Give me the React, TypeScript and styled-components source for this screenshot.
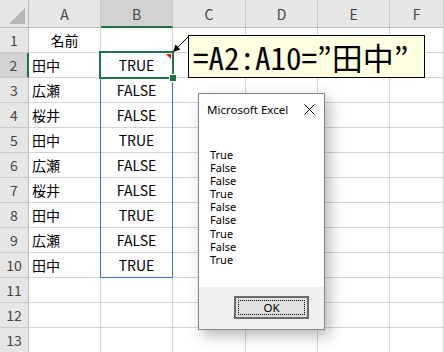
import styled, { createGlobalStyle } from "styled-components";

const names = ["田中", "広瀬", "桜井", "田中", "広瀬", "桜井", "田中", "広瀬", "田中"];
const columns = ["A", "B", "C", "D", "E", "F"];
const ROW_COUNT = 13;

type Pos = { $r: number; $c: number };

const GlobalStyle = createGlobalStyle`
  html, body {
    margin: 0;
    padding: 0;
    background: #fff;
    overflow: hidden;
  }
  body {
    font-family: "Noto Sans CJK JP", "Noto Sans", sans-serif;
  }
`;

const Page = styled.div`
  position: relative;
  width: 444px;
  height: 352px;
  overflow: hidden;
`;

const Sheet = styled.div`
  display: grid;
  grid-template-columns: 29px 72px 72px 73px 72px 72px 1fr;
  grid-template-rows: 28px repeat(${ROW_COUNT}, 25px);
  font-family: "Noto Sans CJK JP", "Noto Sans", sans-serif;
  font-size: 14px;
  color: #000;
`;

const Corner = styled.div`
  grid-row: 1;
  grid-column: 1;
  position: relative;
  background: #e6e6e6;
  border-right: 1px solid #bcbcbc;
  border-bottom: 1px solid #bcbcbc;
  &::after {
    content: "";
    position: absolute;
    right: 3px;
    bottom: 3px;
    width: 0;
    height: 0;
    border-left: 16px solid transparent;
    border-bottom: 16px solid #b5b5b5;
  }
`;

const ColHead = styled.div<Pos & { $active?: boolean }>`
  grid-row: ${({ $r }) => $r};
  grid-column: ${({ $c }) => $c};
  display: flex;
  align-items: center;
  justify-content: center;
  background: ${({ $active }) => ($active ? "#d2d2d2" : "#e6e6e6")};
  border-right: 1px solid #c9c9c9;
  border-bottom: ${({ $active }) => ($active ? "2px solid #217346" : "1px solid #bcbcbc")};
  color: #444;
  font-size: 14px;
  padding-top: 1px;
`;

const RowHead = styled.div<Pos & { $active?: boolean }>`
  grid-row: ${({ $r }) => $r};
  grid-column: ${({ $c }) => $c};
  display: flex;
  align-items: center;
  justify-content: center;
  background: ${({ $active }) => ($active ? "#d2d2d2" : "#e6e6e6")};
  border-right: ${({ $active }) => ($active ? "2px solid #217346" : "1px solid #bcbcbc")};
  border-bottom: 1px solid #c9c9c9;
  color: #444;
  font-size: 14px;
`;

const Cell = styled.div<Pos & { $align?: "left" | "center" }>`
  grid-row: ${({ $r }) => $r};
  grid-column: ${({ $c }) => $c};
  display: flex;
  align-items: center;
  justify-content: ${({ $align }) => ($align === "center" ? "center" : "flex-start")};
  padding-left: ${({ $align }) => ($align === "center" ? "0" : "3px")};
  border-right: 1px solid #d4d4d4;
  border-bottom: 1px solid #d4d4d4;
  white-space: nowrap;
  overflow: hidden;
`;

const RangeBox = styled.div`
  grid-column: 3;
  grid-row: 3 / 12;
  margin-left: -1px;
  border: 1px solid #3a6fd8;
  border-top: none;
  pointer-events: none;
  z-index: 1;
`;

const Selection = styled.div`
  position: relative;
  grid-column: 3;
  grid-row: 3;
  margin: -2px -1px -1px -2px;
  border: 2px solid #217346;
  pointer-events: none;
  z-index: 2;
`;

const FillHandle = styled.span`
  position: absolute;
  right: -5px;
  bottom: -5px;
  width: 6px;
  height: 6px;
  background: #217346;
  border: 1px solid #fff;
`;

const CommentMark = styled.span`
  position: absolute;
  top: 1px;
  right: 1px;
  width: 0;
  height: 0;
  border-left: 5px solid transparent;
  border-top: 5px solid #e81123;
`;

const Callout = styled.div`
  position: absolute;
  left: 188px;
  top: 35px;
  width: 237px;
  height: 43px;
  box-sizing: border-box;
  display: flex;
  align-items: center;
  padding-left: 4px;
  background: #ffffe1;
  border: 1px solid #000;
  font-family: "Noto Sans Mono CJK JP", "Noto Sans CJK JP", monospace;
  font-size: 31px;
  color: #000;
  white-space: nowrap;
  z-index: 3;
`;

const Arrow = styled.svg`
  position: absolute;
  left: 168px;
  top: 30px;
  z-index: 3;
`;

const Dialog = styled.div`
  position: absolute;
  left: 198px;
  top: 93px;
  width: 127px;
  height: 237px;
  box-sizing: border-box;
  display: flex;
  flex-direction: column;
  background: #fff;
  border: 1px solid #858585;
  box-shadow: 5px 6px 14px rgba(0, 0, 0, 0.28);
  font-family: "Noto Sans", "Open Sans", sans-serif;
  z-index: 4;
`;

const TitleBar = styled.div`
  display: flex;
  align-items: center;
  justify-content: space-between;
  height: 30px;
  padding: 0 9px 0 8px;
  font-size: 11.5px;
  color: #000;
`;

const MessageBody = styled.div`
  flex: 1;
  padding: 24px 0 0 11px;
  font-size: 11px;
  line-height: 13.1px;
  color: #000;
`;

const Footer = styled.div`
  display: flex;
  justify-content: flex-end;
  align-items: flex-start;
  height: 42px;
  box-sizing: border-box;
  padding: 9px 15px 0 0;
  background: #f0f0f0;
`;

const OkButton = styled.button`
  position: relative;
  width: 75px;
  height: 23px;
  box-sizing: border-box;
  padding: 0;
  background: #e1e1e1;
  border: 2px solid #6b6b6b;
  font-family: "Noto Sans", "Open Sans", sans-serif;
  font-size: 11.5px;
  color: #000;
  &::after {
    content: "";
    position: absolute;
    inset: 2px;
    border: 1px dotted #000;
  }
`;

const App = () => {
  const results = names.map((n) => n === "田中");

  return (
    <Page>
      <GlobalStyle />
      <Sheet>
        <Corner />
        {columns.map((c, ci) => (
          <ColHead key={c} $r={1} $c={ci + 2} $active={c === "B"}>
            {c}
          </ColHead>
        ))}
        {Array.from({ length: ROW_COUNT }, (_, i) => {
          const row = i + 1;
          const gr = row + 1;
          let a = "";
          let b = "";
          if (row === 1) a = "名前";
          if (row >= 2 && row <= 10) {
            a = names[row - 2];
            b = results[row - 2] ? "TRUE" : "FALSE";
          }
          return [
            <RowHead key={`h${row}`} $r={gr} $c={1} $active={row === 2}>
              {row}
            </RowHead>,
            <Cell key={`a${row}`} $r={gr} $c={2} $align={row === 1 ? "center" : "left"}>
              {a}
            </Cell>,
            <Cell key={`b${row}`} $r={gr} $c={3} $align="center">
              {b}
            </Cell>,
            ...columns.slice(2).map((c, ci) => <Cell key={`${c}${row}`} $r={gr} $c={ci + 4} />),
          ];
        })}
        <RangeBox />
        <Selection>
          <CommentMark />
          <FillHandle />
        </Selection>
      </Sheet>

      <Arrow width="24" height="26" viewBox="0 0 24 26">
        <line x1="21" y1="6" x2="9" y2="18" stroke="#000" strokeWidth="1" />
        <polygon points="5,22 12.4,19.5 7.5,14.6" fill="#000" />
      </Arrow>
      <Callout>=A2:A10=”田中”</Callout>

      <Dialog>
        <TitleBar>
          <span>Microsoft Excel</span>
          <svg width="11" height="11" viewBox="0 0 11 11">
            <path d="M0.5 0.5 L10.5 10.5 M10.5 0.5 L0.5 10.5" stroke="#000" strokeWidth="1" />
          </svg>
        </TitleBar>
        <MessageBody>
          {results.map((r, i) => (
            <div key={i}>{r ? "True" : "False"}</div>
          ))}
        </MessageBody>
        <Footer>
          <OkButton>OK</OkButton>
        </Footer>
      </Dialog>
    </Page>
  );
};

export default App;
